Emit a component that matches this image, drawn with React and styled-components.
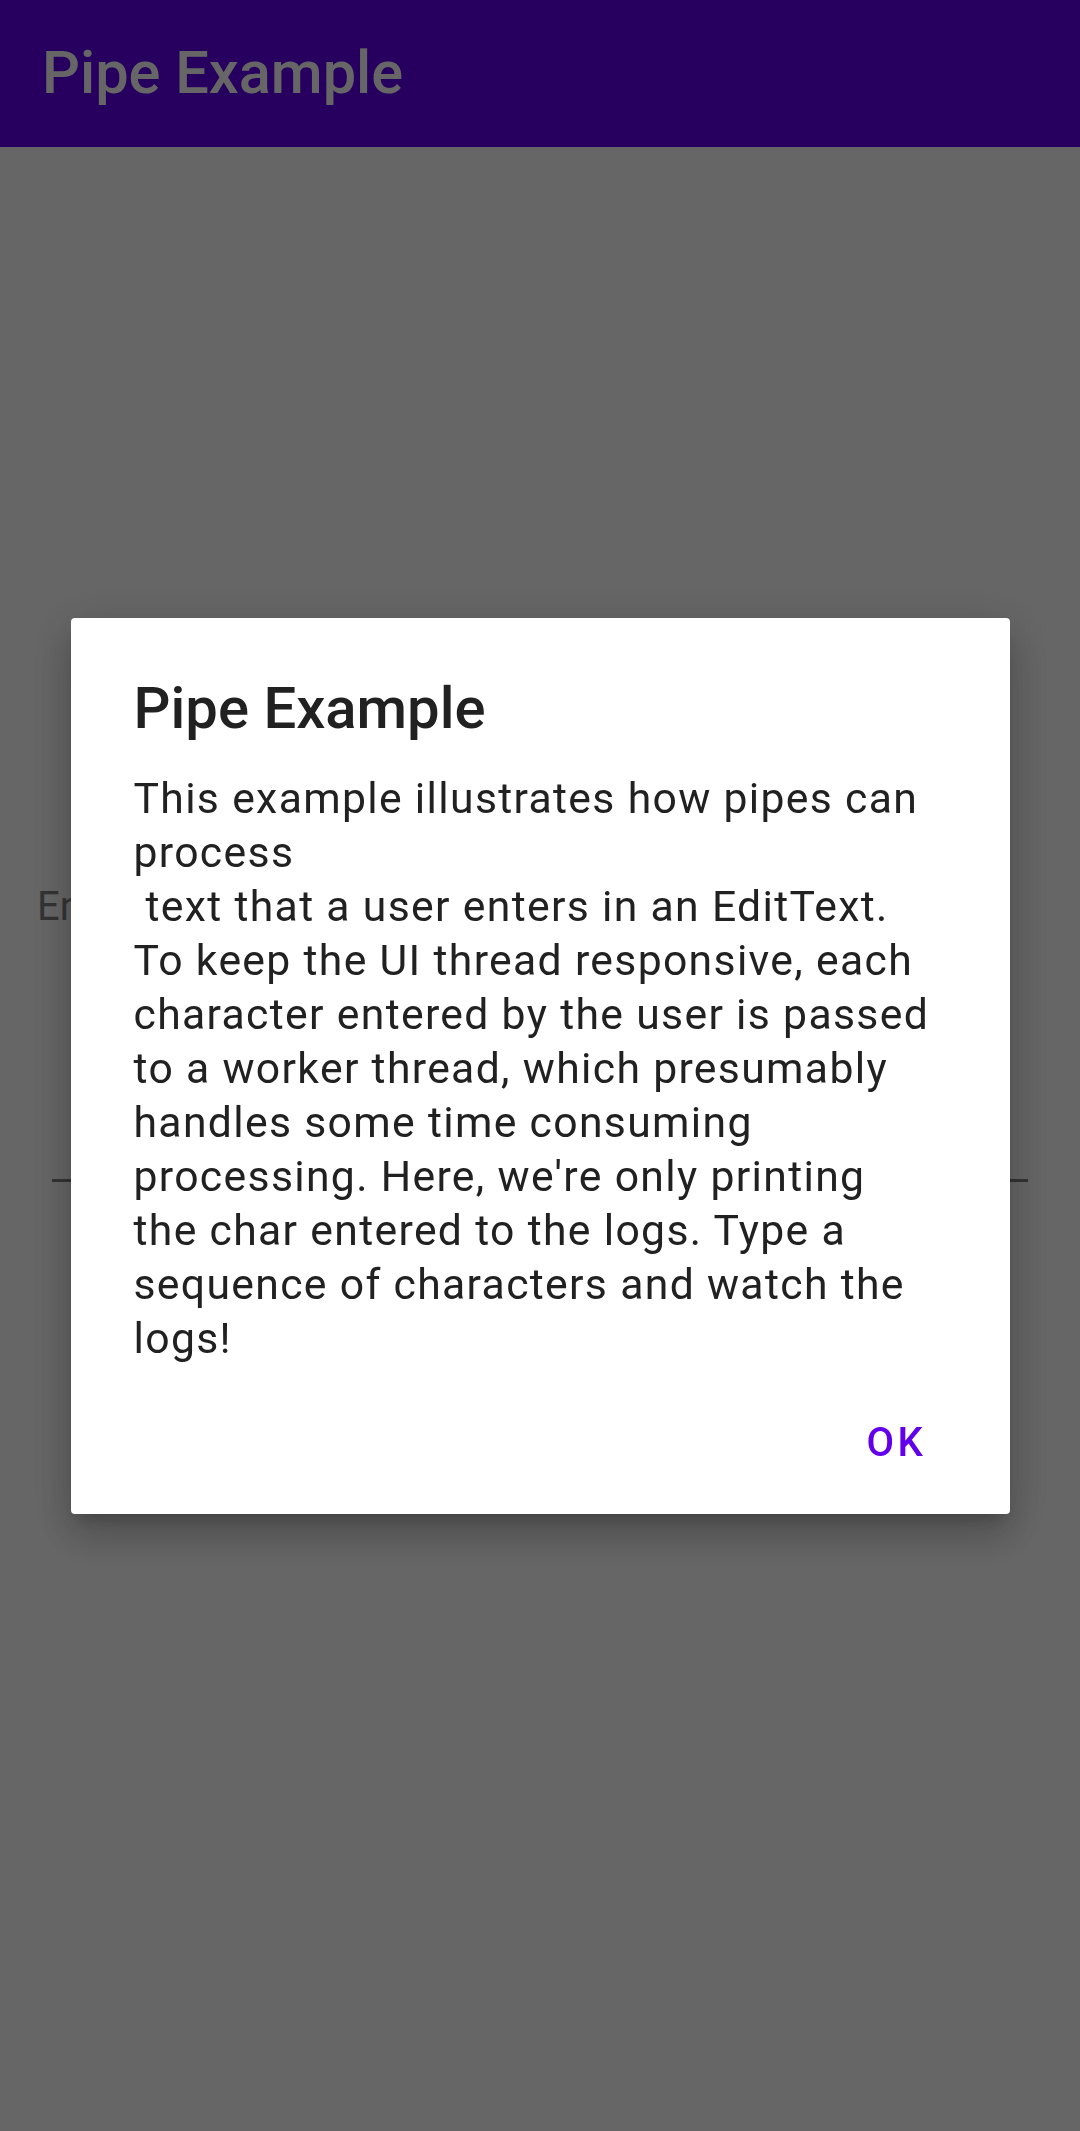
import styled, { createGlobalStyle } from "styled-components";

const GlobalStyle = createGlobalStyle`
  html, body {
    margin: 0;
    padding: 0;
    background: #ffffff;
    font-family: Roboto, "Noto Sans", "Liberation Sans", sans-serif;
  }
`;

const message = [
  "This example illustrates how pipes can",
  "process",
  " text that a user enters in an EditText.",
  "To keep the UI thread responsive, each",
  "character entered by the user is passed",
  "to a worker thread, which presumably",
  "handles some time consuming",
  "processing. Here, we're only printing",
  "the char entered to the logs. Type a",
  "sequence of characters and watch the",
  "logs!",
];

const App = () => {
  return (
    <>
      <GlobalStyle />
      <Screen>
        <AppBar>
          <AppTitle>Pipe Example</AppTitle>
        </AppBar>
        <Content>
          <HintLabel>Enter some text below</HintLabel>
          <EditUnderline />
        </Content>
      </Screen>
      <Scrim>
        <Dialog>
          <DialogTitle>Pipe Example</DialogTitle>
          <DialogMessage>
            {message.map((line, i) => (
              <MessageLine key={i}>{line}</MessageLine>
            ))}
          </DialogMessage>
          <Actions>
            <TextButton>OK</TextButton>
          </Actions>
        </Dialog>
      </Scrim>
    </>
  );
};

const Screen = styled.div`
  width: 1080px;
  height: 2131px;
  background: #ffffff;
  display: flex;
  flex-direction: column;
`;

const AppBar = styled.header`
  height: 147px;
  background: #6200ee;
  display: flex;
  align-items: center;
  padding-left: 42px;
  box-sizing: border-box;
`;

const AppTitle = styled.h1`
  margin: 0;
  color: #ffffff;
  font-size: 59.5px;
  font-weight: 500;
  line-height: 1;
`;

const Content = styled.main`
  flex: 1;
  display: flex;
  flex-direction: column;
`;

const HintLabel = styled.div`
  margin: 736px 0 0 37px;
  font-size: 40px;
  color: #808080;
  white-space: nowrap;
`;

const EditUnderline = styled.div`
  margin: 249px 52px 0;
  height: 3px;
  background: #808080;
`;

const Scrim = styled.div`
  position: fixed;
  inset: 0;
  background: rgba(0, 0, 0, 0.6);
  display: flex;
  align-items: center;
  justify-content: center;
`;

const Dialog = styled.div`
  width: 939px;
  background: #ffffff;
  border-radius: 4px;
  box-shadow: 0 11px 15px -7px rgba(0, 0, 0, 0.2),
    0 24px 38px 3px rgba(0, 0, 0, 0.14), 0 9px 46px 8px rgba(0, 0, 0, 0.12);
  display: flex;
  flex-direction: column;
`;

const DialogTitle = styled.h2`
  margin: 0;
  padding: 56px 63px 0;
  font-size: 58px;
  font-weight: 500;
  color: #212121;
`;

const DialogMessage = styled.div`
  margin-top: 29px;
  padding: 0 63px;
  font-size: 42.7px;
  letter-spacing: 0.03125em;
  line-height: 54px;
  color: #212121;
`;

const MessageLine = styled.div`
  white-space: pre;
`;

const Actions = styled.div`
  display: flex;
  justify-content: flex-end;
  padding: 33px 62px 27px;
`;

const TextButton = styled.button`
  border: none;
  background: none;
  padding: 21px;
  font-family: inherit;
  font-size: 40px;
  font-weight: 500;
  letter-spacing: 0.09em;
  color: #6200ee;
  line-height: normal;
`;

export default App;
